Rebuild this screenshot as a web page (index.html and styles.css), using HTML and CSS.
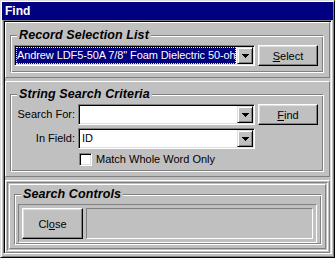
FILE: index.html
```html
<!DOCTYPE html>
<html lang="en">
<head>
  <meta charset="UTF-8" />
  <meta name="viewport" content="width=device-width, initial-scale=1" />
  <title>Find</title>
  <link rel="stylesheet" href="styles.css">
</head>
<body>
  <div class="window">
    <div class="title-bar">Find</div>

    <div class="client">
      <div class="frame">

        <!-- Record selection -->
        <div class="panel">
          <fieldset class="group">
            <legend>Record Selection List</legend>
            <div class="record-row">
              <div class="combo">
                <div class="combo-text selected">Andrew LDF5-50A 7/8" Foam Dielectric 50-oh</div>
                <div class="combo-btn">
                  <svg width="7" height="4" viewBox="0 0 7 4" shape-rendering="crispEdges"><path d="M0 0h7v1H0zM1 1h5v1H1zM2 2h3v1H2zM3 3h1v1H3z" fill="#000"/></svg>
                </div>
              </div>
              <button class="btn"><u>S</u>elect</button>
            </div>
          </fieldset>
        </div>

        <!-- String search criteria -->
        <div class="panel">
          <fieldset class="group">
            <legend>String Search Criteria</legend>
            <div class="search-grid">
              <label class="field-label">Search For:</label>
              <div class="combo">
                <div class="combo-text"></div>
                <div class="combo-btn">
                  <svg width="7" height="4" viewBox="0 0 7 4" shape-rendering="crispEdges"><path d="M0 0h7v1H0zM1 1h5v1H1zM2 2h3v1H2zM3 3h1v1H3z" fill="#000"/></svg>
                </div>
              </div>
              <button class="btn"><u>F</u>ind</button>

              <label class="field-label">In Field:</label>
              <div class="combo">
                <div class="combo-text">ID</div>
                <div class="combo-btn">
                  <svg width="7" height="4" viewBox="0 0 7 4" shape-rendering="crispEdges"><path d="M0 0h7v1H0zM1 1h5v1H1zM2 2h3v1H2zM3 3h1v1H3z" fill="#000"/></svg>
                </div>
              </div>
              <div></div>

              <div></div>
              <div class="check-row">
                <span class="check"></span>
                <span>Match Whole Word Only</span>
              </div>
            </div>
          </fieldset>
        </div>

        <!-- Search controls -->
        <div class="panel panel-controls">
          <div class="bevel-in">
            <div class="bevel-out">
              <fieldset class="group group-controls">
                <legend>Search Controls</legend>
                <div class="controls-box">
                  <button class="btn btn-close">Cl<u>o</u>se</button>
                  <div class="status"></div>
                </div>
              </fieldset>
            </div>
          </div>
        </div>

      </div>
    </div>
  </div>
</body>
</html>
```

FILE: styles.css
```css
html, body {
  margin: 0;
  padding: 0;
  background: #c0c0c0;
}

body {
  font-family: "Liberation Sans", Arial, sans-serif;
  font-size: 11px;
  color: #000;
}

.window {
  box-sizing: border-box;
  width: 335px;
  height: 258px;
  padding: 1px;
  background: #c0c0c0;
  border: 1px solid;
  border-color: #dfdfdf #000 #000 #dfdfdf;
  box-shadow: inset 1px 1px #fff, inset -1px -1px #808080;
  display: flex;
  flex-direction: column;
}

.title-bar {
  height: 18px;
  line-height: 18px;
  background: #000080;
  color: #fff;
  font-weight: bold;
  font-size: 12px;
  padding-left: 3px;
}

.client {
  flex: 1;
  padding: 0 1px 3px 1px;
  display: flex;
}

/* sunken frame holding all three sections */
.frame {
  flex: 1;
  border: 1px solid;
  border-color: #808080 #fff #fff #808080;
  box-shadow: inset 1px 1px #000, inset -1px -1px #dfdfdf;
  padding: 1px 1px 0 1px;
  display: flex;
  flex-direction: column;
  gap: 3px;
}

.panel {
  border: 1px solid;
  border-color: #fff #808080 #808080 #fff;
  padding: 6px 5px 4px 4px;
}

.group {
  margin: 0;
  min-width: 0;
  padding: 3px 3px 6px 3px;
  border: 1px solid;
  border-color: #808080 #fff #fff #808080;
  box-shadow: inset 1px 1px #fff, inset -1px -1px #808080;
}

.group legend {
  margin-left: 3px;
  padding: 0 2px;
  background: #c0c0c0;
  font-weight: bold;
  font-style: italic;
  font-size: 12.5px;
  letter-spacing: 0.1px;
  line-height: 13px;
}

.record-row {
  display: flex;
  gap: 3px;
}

.record-row .combo {
  width: 241px;
}

.combo {
  box-sizing: border-box;
  height: 21px;
  padding: 1px;
  background: #fff;
  border: 1px solid;
  border-color: #808080 #fff #fff #808080;
  box-shadow: inset 1px 1px #000, inset -1px -1px #dfdfdf;
  display: flex;
}

.combo-text {
  flex: 1;
  min-width: 0;
  overflow: hidden;
  white-space: nowrap;
  line-height: 17px;
  padding: 0 2px;
}

.combo-text.selected {
  background: #000080;
  color: #fff;
  outline: 1px dotted #ffff00;
  outline-offset: -1px;
  padding: 0 1px;
  margin-right: 1px;
  letter-spacing: -0.1px;
}

.combo-btn {
  box-sizing: border-box;
  width: 16px;
  height: 17px;
  background: #c0c0c0;
  border: 1px solid;
  border-color: #dfdfdf #000 #000 #dfdfdf;
  box-shadow: inset 1px 1px #fff, inset -1px -1px #808080;
  display: flex;
  align-items: center;
  justify-content: center;
}

.btn {
  box-sizing: border-box;
  width: 60px;
  height: 21px;
  padding: 0;
  background: #c0c0c0;
  border: 1px solid;
  border-color: #fff #000 #000 #fff;
  box-shadow: inset -1px -1px #808080, inset 1px 1px #dfdfdf;
  font-family: inherit;
  font-size: 11px;
  color: #000;
}

.search-grid {
  display: grid;
  grid-template-columns: 61px 177px 60px;
  grid-template-rows: 21px 21px 13px;
  column-gap: 3px;
  row-gap: 3px;
}

.search-grid .check-row {
  margin-top: 2px;
}

.field-label {
  text-align: right;
  line-height: 21px;
}

.check-row {
  display: flex;
  align-items: center;
  gap: 4px;
  margin-left: 1px;
  grid-column: 2 / 4;
  line-height: 13px;
}

.check {
  box-sizing: border-box;
  width: 13px;
  height: 13px;
  background: #fff;
  border: 1px solid;
  border-color: #808080 #fff #fff #808080;
  box-shadow: inset 1px 1px #000, inset -1px -1px #dfdfdf;
}

/* search controls: stacked bevels */
.panel-controls {
  flex: 1;
  padding: 1px;
  display: flex;
}

.bevel-in {
  flex: 1;
  border: 1px solid;
  border-color: #808080 #fff #fff #808080;
  padding: 1px;
  display: flex;
}

.bevel-out {
  flex: 1;
  border: 1px solid;
  border-color: #fff #808080 #808080 #fff;
  padding: 3px 3px 3px 4px;
}

.group-controls {
  padding: 3px 4px 1px 3px;
}

.controls-box {
  border: 1px solid;
  border-color: #808080 #fff #fff #808080;
  padding: 3px;
  display: flex;
  gap: 3px;
}

.btn-close {
  width: 61px;
  height: 31px;
}

.status {
  flex: 1;
  height: 29px;
  border: 1px solid;
  border-color: #808080 #fff #fff #808080;
}
```
